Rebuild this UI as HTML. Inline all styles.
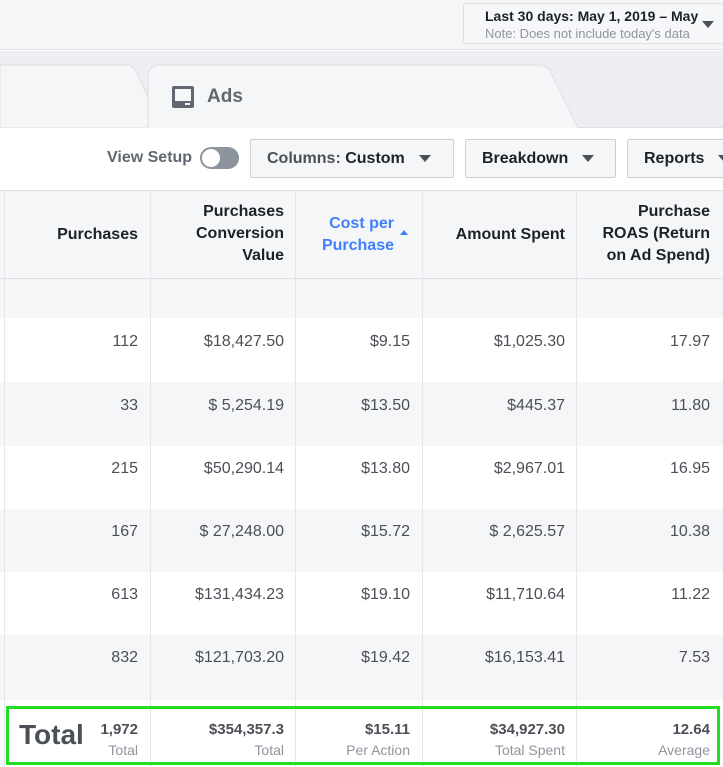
<!DOCTYPE html>
<html><head><meta charset="utf-8"><style>
*{margin:0;padding:0;box-sizing:border-box}
body{width:723px;height:767px;overflow:hidden;background:#fff;font-family:"Liberation Sans",sans-serif;color:#4b4f56;position:relative}
.abs{position:absolute}
.top{left:0;top:0;width:723px;height:50px;background:#f5f6f7;border-bottom:1px solid #dddfe2}
.date{left:463px;top:3px;width:262px;height:41px;border:1px solid #dddfe2;background:#f6f7f9;border-radius:3px}
.tabs{left:0;top:51px;width:723px;height:77px;background:#eceef1;border-bottom:1px solid #dddfe2}
.btn{top:139px;height:39px;border:1px solid #ccd0d5;background:#f5f6f7;border-radius:2px;font-size:16px;font-weight:bold;color:#1d2129;line-height:37px;padding-left:16px}
.tri{display:inline-block;width:0;height:0;border-left:6px solid transparent;border-right:6px solid transparent;border-top:7px solid #4b4f56;vertical-align:middle;margin-left:14px}
.hdr{left:0;top:190px;width:723px;height:89px;background:#f5f6f7;border-top:1px solid #dddfe2;border-bottom:1px solid #dddfe2}
.th{font-size:16px;font-weight:bold;color:#1d2129;text-align:right;line-height:22px}
.row{left:0;width:723px}
.g{background:#f5f6f7}
.vl{top:190px;width:1px;height:577px;background:#e4e6e9}
.c{font-size:16px;color:#4b4f56;text-align:right}
</style></head><body>
<div class="abs top"></div>
<div class="abs date"></div>
<div class="abs" style="left:485px;top:8px;font-size:14px;font-weight:bold;color:#1d2129">Last 30 days: May 1, 2019 – May</div>
<div class="abs" style="left:485px;top:26px;font-size:13px;color:#90949c;width:206px;overflow:hidden;white-space:nowrap">Note: Does not include today's data</div>
<div class="abs" style="left:702px;top:21px;width:0;height:0;border-left:6px solid transparent;border-right:6px solid transparent;border-top:7px solid #4b4f56"></div>
<div class="abs tabs"></div>
<svg class="abs" style="left:0;top:51px" width="723" height="77"><path d="M0 14 H125 Q133 14 137 22 L162 77 H0Z" fill="#f5f6f7" stroke="#dddfe2"/><path d="M148 77 V26 Q148 14 160 14 H538 Q547 14 551 22 L578 77" fill="#f5f6f7" stroke="#dddfe2"/></svg>
<svg class="abs" style="left:171px;top:85px" width="24" height="24"><rect x="1" y="1" width="22" height="22" rx="2" fill="#606770"/><rect x="4" y="4" width="16" height="12" fill="#f5f6f7"/><rect x="14" y="18" width="5" height="2" fill="#f5f6f7"/></svg>
<div class="abs" style="left:207px;top:86px;font-size:19px;font-weight:bold;color:#606770">Ads</div>
<div class="abs" style="left:107px;top:149px;font-size:16px;font-weight:bold;color:#606770">View Setup</div>
<div class="abs" style="left:200px;top:147px;width:39px;height:22px;border-radius:11px;background:#8d949e"></div>
<div class="abs" style="left:202px;top:149px;width:18px;height:18px;border-radius:9px;background:#fff"></div>
<div class="abs btn" style="left:250px;width:204px"><span style="color:#4b4f56">Columns:</span> Custom<span class="tri"></span></div>
<div class="abs btn" style="left:465px;width:151px">Breakdown<span class="tri"></span></div>
<div class="abs btn" style="left:627px;width:110px">Reports<span class="tri"></span></div>
<div class="abs hdr"></div>
<div class="abs th" style="left:0;width:138px;top:224px">Purchases</div>
<div class="abs th" style="left:150px;width:134px;top:201px">Purchases<br>Conversion<br>Value</div>
<div class="abs th" style="left:295px;width:99px;top:213px;color:#4080ff">Cost per<br>Purchase</div>
<div class="abs" style="left:400px;top:230px;width:0;height:0;border-left:4px solid transparent;border-right:4px solid transparent;border-bottom:5px solid #4080ff"></div>
<div class="abs th" style="left:422px;width:143px;top:224px">Amount Spent</div>
<div class="abs th" style="left:576px;width:134px;top:201px">Purchase<br>ROAS (Return<br>on Ad Spend)</div>
<div class="abs row g" style="top:279px;height:39px"></div>
<div class="abs row g" style="top:382px;height:64px"></div>
<div class="abs row g" style="top:509px;height:63px"></div>
<div class="abs row g" style="top:635px;height:65px"></div>
<div class="abs vl" style="left:4px"></div><div class="abs vl" style="left:150px"></div><div class="abs vl" style="left:295px"></div><div class="abs vl" style="left:422px"></div><div class="abs vl" style="left:576px"></div>
<div class="abs" style="top:333px;left:0;width:723px">
<div class="abs c" style="left:0;width:138px">112</div><div class="abs c" style="left:150px;width:134px">$18,427.50</div><div class="abs c" style="left:295px;width:115px">$9.15</div><div class="abs c" style="left:422px;width:143px">$1,025.30</div><div class="abs c" style="left:576px;width:134px">17.97</div></div>
<div class="abs" style="top:397px;left:0;width:723px">
<div class="abs c" style="left:0;width:138px">33</div><div class="abs c" style="left:150px;width:134px">$ 5,254.19</div><div class="abs c" style="left:295px;width:115px">$13.50</div><div class="abs c" style="left:422px;width:143px">$445.37</div><div class="abs c" style="left:576px;width:134px">11.80</div></div>
<div class="abs" style="top:460px;left:0;width:723px">
<div class="abs c" style="left:0;width:138px">215</div><div class="abs c" style="left:150px;width:134px">$50,290.14</div><div class="abs c" style="left:295px;width:115px">$13.80</div><div class="abs c" style="left:422px;width:143px">$2,967.01</div><div class="abs c" style="left:576px;width:134px">16.95</div></div>
<div class="abs" style="top:523px;left:0;width:723px">
<div class="abs c" style="left:0;width:138px">167</div><div class="abs c" style="left:150px;width:134px">$ 27,248.00</div><div class="abs c" style="left:295px;width:115px">$15.72</div><div class="abs c" style="left:422px;width:143px">$ 2,625.57</div><div class="abs c" style="left:576px;width:134px">10.38</div></div>
<div class="abs" style="top:586px;left:0;width:723px">
<div class="abs c" style="left:0;width:138px">613</div><div class="abs c" style="left:150px;width:134px">$131,434.23</div><div class="abs c" style="left:295px;width:115px">$19.10</div><div class="abs c" style="left:422px;width:143px">$11,710.64</div><div class="abs c" style="left:576px;width:134px">11.22</div></div>
<div class="abs" style="top:649px;left:0;width:723px">
<div class="abs c" style="left:0;width:138px">832</div><div class="abs c" style="left:150px;width:134px">$121,703.20</div><div class="abs c" style="left:295px;width:115px">$19.42</div><div class="abs c" style="left:422px;width:143px">$16,153.41</div><div class="abs c" style="left:576px;width:134px">7.53</div></div>
<div class="abs" style="left:6px;top:706px;width:714px;height:59px;background:#fff;border:3px solid #22dd22"></div>
<div class="abs vl" style="left:150px;top:709px;height:53px"></div><div class="abs vl" style="left:295px;top:709px;height:53px"></div><div class="abs vl" style="left:422px;top:709px;height:53px"></div><div class="abs vl" style="left:576px;top:709px;height:53px"></div>
<div class="abs" style="left:19px;top:719px;font-size:28px;font-weight:bold;color:#4b4f56">Total</div>
<div class="abs c" style="left:0;width:138px;top:721px;font-weight:bold;font-size:15px">1,972</div>
<div class="abs c" style="left:150px;width:134px;top:721px;font-weight:bold;font-size:15px">$354,357.3</div>
<div class="abs c" style="left:295px;width:115px;top:721px;font-weight:bold;font-size:15px">$15.11</div>
<div class="abs c" style="left:422px;width:143px;top:721px;font-weight:bold;font-size:15px">$34,927.30</div>
<div class="abs c" style="left:576px;width:134px;top:721px;font-weight:bold;font-size:15px">12.64</div>
<div class="abs c" style="left:0;width:138px;top:742px;font-size:14px;color:#90949c">Total</div>
<div class="abs c" style="left:150px;width:134px;top:742px;font-size:14px;color:#90949c">Total</div>
<div class="abs c" style="left:295px;width:115px;top:742px;font-size:14px;color:#90949c">Per Action</div>
<div class="abs c" style="left:422px;width:143px;top:742px;font-size:14px;color:#90949c">Total Spent</div>
<div class="abs c" style="left:576px;width:134px;top:742px;font-size:14px;color:#90949c">Average</div>
</body></html>
